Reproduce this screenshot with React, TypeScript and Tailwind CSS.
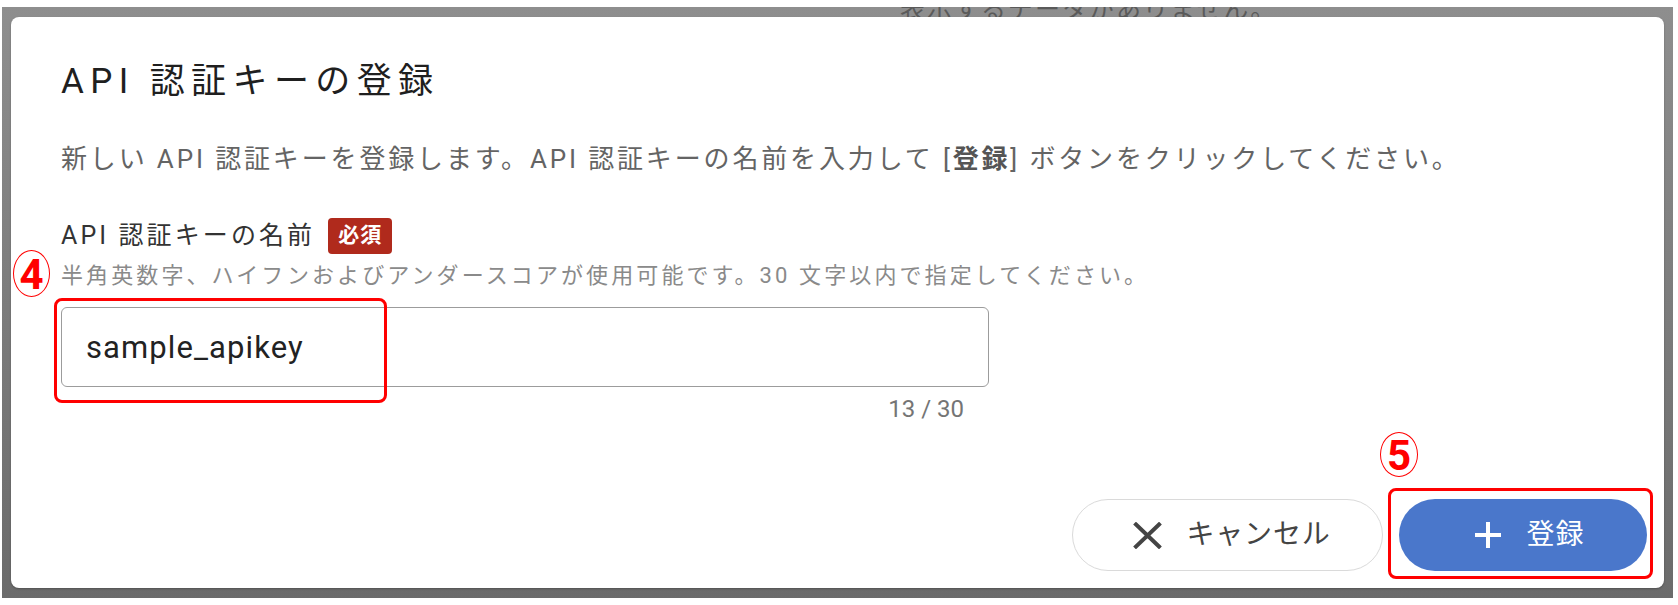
import { useState } from "react";

const FONT = "font-['Roboto','Noto_Sans_CJK_JP',sans-serif]";

function CloseGlyph() {
  return (
    <svg width="29" height="27" viewBox="0 0 29 27" fill="none" aria-hidden="true">
      <path d="M3 2.5 L26 24.5 M26 2.5 L3 24.5" stroke="#444444" strokeWidth="4" strokeLinecap="square" />
    </svg>
  );
}

function PlusGlyph() {
  return (
    <svg width="30" height="28" viewBox="0 0 30 28" fill="none" aria-hidden="true">
      <path d="M15 1 V27 M2 14 H28" stroke="#ffffff" strokeWidth="4" />
    </svg>
  );
}

// red circled step number drawn over the screenshot
function StepMark({ n, className }: { n: number; className: string }) {
  return (
    <div
      className={`absolute flex items-center justify-center rounded-[50%] border-[1.5px] border-[#ff0000] pt-[2px] text-[42px] leading-none font-bold text-[#ff0000] ${className}`}
    >
      {n}
    </div>
  );
}

export default function App() {
  const [name, setName] = useState("sample_apikey");

  return (
    <div className={`h-[605px] w-[1678px] bg-white pt-[7px] pr-[5px] pb-[7px] pl-[2px] ${FONT}`}>
      <div className="flex h-full flex-col bg-linear-to-b from-[#8e8e8e] to-[#6b6b6b] px-[9px] pb-[10px]">
        <div className="h-[10px] overflow-hidden pl-[889px]">
          <p className="mt-[-9px] text-[25px] leading-[24px] tracking-[2px] text-[#5a5a5a]">表示するデータがありません。</p>
        </div>

        <div className="relative flex flex-1 flex-col rounded-[8px] bg-white pr-[17px] pb-[17px] pl-[50px] shadow-[0_1px_2px_rgba(0,0,0,0.25)]">
          <h2 className="mt-[45px] text-[35px] leading-[40px] tracking-[6.4px] text-[#1f1f1f]">API 認証キーの登録</h2>

          <p className="mt-[41px] text-[26px] leading-[32px] tracking-[2.85px] text-[#646464]">
            新しい API 認証キーを登録します。API 認証キーの名前を入力して [<span className="font-bold text-[#555555]">登録</span>] ボタンをクリックしてください。
          </p>

          <div className="mt-[43px] flex h-[36px] items-center">
            <span className="text-[25px] leading-[30px] tracking-[3.1px] text-[#333333]">API 認証キーの名前</span>
            <span className="ml-[13px] flex h-[36px] w-[64px] items-center justify-center rounded-[4px] bg-[#b02a1c] text-[21px] font-bold tracking-[1px] text-white">
              必須
            </span>
          </div>

          <p className="mt-[9px] text-[22px] leading-[26px] tracking-[3.1px] text-[#8a8a8a]">
            半角英数字、ハイフンおよびアンダースコアが使用可能です。30 文字以内で指定してください。
          </p>

          <input
            value={name}
            onChange={(e) => setName(e.target.value)}
            maxLength={30}
            className="mt-[18px] h-[80px] w-[928px] rounded-[6px] border-[1.5px] border-[#9c9c9c] pl-[24px] text-[31px] tracking-[1.1px] text-[#222222] outline-none"
          />
          <div className="mt-[10px] w-[928px] pr-[25px] text-right text-[24px] leading-[24px] text-[#757575]">
            {name.length} / 30
          </div>

          <div className="mt-auto flex justify-end gap-[16px]">
            <button className="flex h-[72px] w-[311px] items-center justify-center gap-[24px] rounded-full border-[1.5px] border-[#dadada] bg-white pl-[9px]">
              <CloseGlyph />
              <span className="text-[28px] tracking-[0.8px] text-[#444444]">キャンセル</span>
            </button>
            <button className="flex h-[72px] w-[248px] items-center justify-center gap-[23px] rounded-full bg-[#4a77cb] pl-[12px]">
              <PlusGlyph />
              <span className="text-[28px] tracking-[1px] text-white">登録</span>
            </button>
          </div>

          <StepMark n={4} className="top-[233px] left-[2px] h-[47px] w-[37px]" />
          <div className="absolute top-[281px] left-[43px] h-[105px] w-[333px] rounded-[8px] border-[3px] border-[#ff0000]" />
          <StepMark n={5} className="top-[415px] left-[1369px] h-[45px] w-[38px]" />
          <div className="absolute top-[471px] left-[1377px] h-[91px] w-[265px] rounded-[8px] border-[3px] border-[#ff0000]" />
        </div>
      </div>
    </div>
  );
}
